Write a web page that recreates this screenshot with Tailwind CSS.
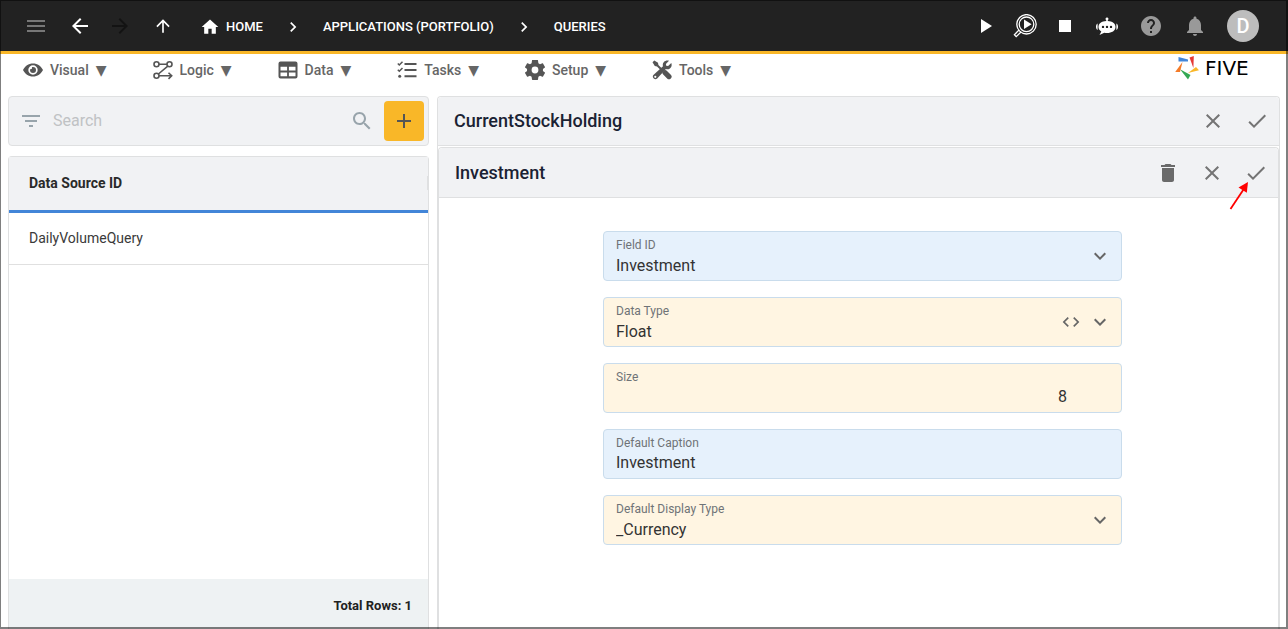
<!DOCTYPE html>
<html lang="en">
<head>
<meta charset="utf-8">
<meta name="viewport" content="width=device-width, initial-scale=1">
<title>Five - Queries</title>
<script src="https://cdn.jsdelivr.net/npm/@tailwindcss/browser@4"></script>
</head>
<body class="relative flex h-screen flex-col overflow-hidden bg-white font-['Roboto',sans-serif] text-[#212121]">
  <header class="flex h-[54px] shrink-0 items-center justify-between border-b-3 border-[#f9b728] bg-[#222] pl-4 pr-[19px] pt-px text-white">
    <div class="flex items-center">
      <button aria-label="Menu" class="mr-1 flex size-10 items-center justify-center text-[#777]"><svg class="size-6" viewBox="0 0 24 24" fill="currentColor"><path d="M3 18h18v-2H3v2zm0-5h18v-2H3v2zm0-7v2h18V6H3z"/></svg></button>
      <button aria-label="Back" class="flex size-10 items-center justify-center"><svg class="size-6" viewBox="0 0 24 24" fill="currentColor"><path d="M20 11H7.830l5.590-5.590L12 4l-8 8 8 8 1.410-1.410L7.830 13H20v-2z"/></svg></button>
      <button aria-label="Forward" disabled class="flex size-10 items-center justify-center text-[#131313]"><svg class="size-6" viewBox="0 0 24 24" fill="currentColor"><path d="M12 4l-1.410 1.410L16.170 11H4v2h12.170l-5.580 5.590L12 20l8-8z"/></svg></button>
      <button aria-label="Up" class="ml-[3px] flex size-10 items-center justify-center"><svg class="size-5" viewBox="0 0 24 24" fill="currentColor"><path d="M4 12l1.410 1.410L11 7.830V20h2V7.830l5.580 5.590L20 12l-8-8-8 8z"/></svg></button>
      <nav aria-label="Breadcrumb" class="ml-[17px] flex items-center pt-px text-[13px] font-medium">
        <a href="#" class="flex items-center gap-1.5"><svg class="size-5" viewBox="0 0 24 24" fill="currentColor"><path d="M10 20v-6h4v6h5v-8h3L12 3 2 12h3v8z"/></svg>HOME</a>
        <svg class="mx-5 size-5" viewBox="0 0 24 24" fill="currentColor"><path d="M10 6 8.590 7.410 13.170 12l-4.580 4.590L10 18l6-6z"/></svg>
        <a href="#">APPLICATIONS (PORTFOLIO)</a>
        <svg class="mx-5 size-5" viewBox="0 0 24 24" fill="currentColor"><path d="M10 6 8.590 7.410 13.170 12l-4.580 4.590L10 18l6-6z"/></svg>
        <a href="#">QUERIES</a>
      </nav>
    </div>
    <div class="flex items-center">
      <button aria-label="Run" class="flex size-10 items-center justify-center"><svg class="size-6" viewBox="0 0 24 24" fill="currentColor"><path d="M8 5v14l11-7z"/></svg></button>
      <button aria-label="Inspect" class="flex size-10 items-center justify-center"><svg class="size-6" viewBox="0 0 24 24" fill="none" stroke="currentColor"><circle cx="13.500" cy="10.300" r="9.700" stroke-width="1.300"/><circle cx="13.500" cy="10.300" r="7.300" stroke-width="1.300"/><path d="M11 5.500v9.600l7.600-4.800z" fill="currentColor" stroke="none"/><path d="m6 16-4.600 4.800 1.800 1.800L8 18" stroke-width="1.300"/></svg></button>
      <button aria-label="Stop" class="flex size-10 items-center justify-center"><svg class="size-6" viewBox="0 0 24 24" fill="currentColor"><path d="M6 6h12v12H6z"/></svg></button>
      <button aria-label="Assistant" class="flex h-10 w-11 items-center justify-center"><svg class="size-6" viewBox="0 0 24 24" fill="currentColor"><path fill-rule="evenodd" d="M12 3.500a1.400 1.400 0 0 1 .8 2.600V7c4.500.2 7.700 2.500 7.700 6 0 3.700-3.700 6-8.500 6-1 0-1.800-.1-2.700-.3L4.500 21l1.800-3.600c-1.800-1-2.800-2.500-2.800-4.400 0-3.500 3.200-5.800 7.700-6v-.9A1.400 1.400 0 0 1 12 3.500zM8 11.700a1.200 1.200 0 1 0 0 2.400 1.200 1.200 0 0 0 0-2.400zm4 0a1.200 1.200 0 1 0 0 2.400 1.200 1.200 0 0 0 0-2.400zm4 0a1.200 1.200 0 1 0 0 2.400 1.200 1.200 0 0 0 0-2.400z"/><path d="M2.600 9.500v6.500C1.600 15.500 1 14.400 1 12.800s.6-2.800 1.600-3.300zm18.800 0v6.500c1-.5 1.600-1.600 1.600-3.200s-.6-2.800-1.600-3.300z"/></svg></button>
      <button aria-label="Help" class="flex h-10 w-11 items-center justify-center text-[#999]"><svg class="size-6" viewBox="0 0 24 24" fill="currentColor"><path d="M12 2C6.480 2 2 6.480 2 12s4.480 10 10 10 10-4.480 10-10S17.520 2 12 2zm1 17h-2v-2h2v2zm2.070-7.750-.9.920C13.450 12.900 13 13.500 13 15h-2v-.5c0-1.100.45-2.100 1.170-2.830l1.240-1.260c.37-.36.590-.86.590-1.410 0-1.100-.9-2-2-2s-2 .9-2 2H8c0-2.210 1.790-4 4-4s4 1.790 4 4c0 .88-.36 1.680-.93 2.250z"/></svg></button>
      <button aria-label="Notifications" class="flex h-10 w-11 items-center justify-center text-[#999]"><svg class="size-6" viewBox="0 0 24 24" fill="currentColor"><path d="M12 22c1.100 0 2-.9 2-2h-4c0 1.100.89 2 2 2zm6-6v-5c0-3.070-1.640-5.640-4.500-6.320V4c0-.83-.67-1.500-1.500-1.500s-1.500.67-1.500 1.500v.68C7.630 5.360 6 7.920 6 11v5l-2 2v1h16v-1l-2-2z"/></svg></button>
      <button aria-label="Account" class="mx-2.5 flex size-8 items-center justify-center rounded-full bg-[#bdbdbd] text-xl font-medium">D</button>
    </div>
  </header>

  <div class="flex h-[42px] shrink-0 items-start justify-between pl-[23px] pr-[25px]">
    <nav aria-label="Main" class="flex gap-[46px] pt-1.5 text-sm font-medium text-[#666]">
      <button class="flex items-center gap-[7px]"><svg class="size-5 text-[#555]" viewBox="0 0 20 20" fill="none"><path fill="currentColor" fill-rule="evenodd" d="M10 3.500c4.500 0 8.200 2.700 10 6.500-1.800 3.800-5.500 6.500-10 6.500S1.800 13.800 0 10c1.800-3.800 5.500-6.500 10-6.500zm0 1.800a4.700 4.700 0 1 0 0 9.400 4.700 4.700 0 0 0 0-9.400z"/><path fill="currentColor" d="M10 7a3 3 0 1 1-3 3c0-.4.100-.7.200-1 .9.600 2.300-.4 1.700-1.800.3-.1.700-.2 1.100-.2z"/></svg><span>Visual</span><span class="font-['DejaVu_Sans',sans-serif] font-normal">▼</span></button>
      <button class="flex items-center gap-[7px]"><svg class="size-5 text-[#555]" viewBox="0 0 20 20" fill="none" stroke="currentColor" stroke-width="1.600"><circle cx="3.500" cy="4.200" r="2.500"/><circle cx="16.500" cy="4.200" r="2.500"/><circle cx="3.500" cy="15.800" r="2.500"/><path d="M6 4.200h8M14.800 6.200 5.400 14M6 15.800h12.500M15.500 12.700l3.200 3.100-3.200 3.100"/></svg><span>Logic</span><span class="font-['DejaVu_Sans',sans-serif] font-normal">▼</span></button>
      <button class="flex items-center gap-[7px]"><svg class="size-5 text-[#555]" viewBox="0 0 20 20" fill="currentColor"><path fill-rule="evenodd" d="M2.500 1.500h15A2 2 0 0 1 19.500 3.500v13a2 2 0 0 1-2 2h-15a2 2 0 0 1-2-2v-13a2 2 0 0 1 2-2zM2.500 6.800v3.700h6.600V6.800zm8.400 0v3.700h6.600V6.800zM2.500 12.500v3.800h6.600v-3.800zm8.400 0v3.800h6.600v-3.800z"/></svg><span>Data</span><span class="font-['DejaVu_Sans',sans-serif] font-normal">▼</span></button>
      <button class="flex items-center gap-[7px]"><svg class="size-5 text-[#555]" viewBox="0 0 20 20" fill="none" stroke="currentColor"><path stroke-width="2" d="M7.500 4H19.500M7.500 10H19.500M7.500 16.300H19.500"/><path stroke-width="1.500" d="m.8 3.500 1.500 1.500 3.200-3.300M.8 9.700l1.500 1.500 3.200-3.300"/><circle cx="2.700" cy="16.300" r="1.500" fill="currentColor" stroke="none"/></svg><span>Tasks</span><span class="font-['DejaVu_Sans',sans-serif] font-normal">▼</span></button>
      <button class="flex items-center gap-[7px]"><svg class="size-5 text-[#555]" viewBox="2 2 20 20" fill="currentColor"><path d="M19.900 12.900c0-.3.100-.6.100-.9s0-.6-.1-.9l2-1.600c.2-.1.200-.4.100-.6l-2-3.500c-.1-.2-.4-.3-.6-.2l-2.400 1c-.5-.4-1-.7-1.600-.9L15 2.400c0-.2-.2-.4-.5-.4h-5c-.2 0-.5.200-.5.400l-.4 2.900c-.6.200-1.100.6-1.600.9l-2.400-1c-.2-.1-.5 0-.6.200l-2 3.500c-.1.200-.1.500.1.600l2 1.600c0 .3-.1.600-.1.900s0 .6.100.9l-2 1.600c-.2.100-.2.400-.1.600l2 3.500c.1.200.4.300.6.200l2.400-1c.5.400 1 .7 1.600.9l.4 2.900c0 .2.300.4.500.4h5c.3 0 .5-.2.500-.4l.4-2.900c.6-.2 1.100-.6 1.600-.9l2.400 1c.2.100.5 0 .6-.2l2-3.500c.1-.2.100-.5-.1-.6zM12 15.400a3.400 3.400 0 1 1 0-6.800 3.400 3.400 0 0 1 0 6.800z"/></svg><span>Setup</span><span class="font-['DejaVu_Sans',sans-serif] font-normal">▼</span></button>
      <button class="flex items-center gap-[7px]"><svg class="size-5 text-[#555]" viewBox="0 0 20 20" fill="currentColor"><path d="M2.300.5 6 2.800l.4 2.200L10 8.600 8.600 10 5 6.400l-2.200-.4L.5 2.300z"/><path d="m10.500 12 1.700-1.700c.8-.4 2-.2 2.800.6l3.800 3.800a2.600 2.600 0 0 1-3.700 3.700l-3.900-3.800c-.8-.8-1-1.900-.7-2.600z"/><path fill-rule="evenodd" d="M17 .8 13.900 4l.3 1.800 1.900.3L19.300 3c.8 2.200.2 4.300-1.400 5.400-1.200.9-2.600 1-4 .6l-8.700 9.500A2.600 2.600 0 0 1 1.400 15L11 6.200c-.5-1.400-.2-3 .9-4.200C13.200.6 15.200.1 17 .8zM3.300 15.700a1.100 1.100 0 1 0 0 2.200 1.100 1.100 0 0 0 0-2.200z"/></svg><span>Tools</span><span class="font-['DejaVu_Sans',sans-serif] font-normal">▼</span></button>
    </nav>
    <a href="#" aria-label="Five" class="flex w-[88px] items-center gap-1.5 pt-0.5">
      <svg class="size-6 shrink-0" viewBox="0 0 24 24"><path fill="#4285d8" d="M3.500 1l9.500 2.600v2H3.500z"/><path fill="#e53935" d="M14.500 1.500 18.800 0l-.4 12z"/><path fill="#f9b728" d="m13 17 8-6 3 3.200z"/><path fill="#34a853" d="M5 13.200 15.500 19 13 23.500z"/><path fill="#f47b28" d="M7.500 6 5 16H.2z"/></svg>
      <span class="font-['DejaVu_Sans',sans-serif] text-xl leading-6 text-black">FIVE</span>
    </a>
  </div>

  <main class="flex min-h-0 flex-1 gap-2 px-2">
    <section class="flex w-[421px] shrink-0 flex-col">
      <div class="flex h-[50px] shrink-0 items-center rounded border border-[#dfe0e1] bg-[#f1f2f4] pl-2.5 pr-1">
        <button aria-label="Filter" class="text-[#98a4ab]"><svg class="size-6" viewBox="0 0 24 24" fill="currentColor"><path d="M10 18h4v-2h-4v2zM3 6v2h18V6H3zm3 7h12v-2H6v2z"/></svg></button>
        <input type="search" aria-label="Search" placeholder="Search" class="ml-2.5 min-w-0 flex-1 bg-transparent text-base outline-none placeholder:text-[#c0c2c4]">
        <button aria-label="Search" class="mr-2.5 text-[#98a4ab]"><svg class="size-6" viewBox="0 0 24 24" fill="currentColor"><path d="M15.500 14h-.79l-.28-.27C15.410 12.590 16 11.110 16 9.500 16 5.910 13.090 3 9.500 3S3 5.910 3 9.500 5.910 16 9.500 16c1.610 0 3.090-.59 4.230-1.570l.27.28v.79l5 4.990L20.490 19l-4.990-5zm-6 0C7.010 14 5 11.990 5 9.500S7.010 5 9.500 5 14 7.010 14 9.500 11.990 14 9.500 14z"/></svg></button>
        <button aria-label="Add" class="flex size-10 items-center justify-center rounded bg-[#f9b728] text-[#555]"><svg class="size-6" viewBox="0 0 24 24" fill="currentColor"><path d="M19 13h-6v6h-2v-6H5v-2h6V5h2v6h6v2z"/></svg></button>
      </div>
      <div class="mt-2.5 flex min-h-0 flex-1 flex-col rounded-t border-x border-t border-[#dfe0e1]">
        <table class="w-full border-collapse text-left text-sm">
          <thead><tr class="h-[54px] border-b-3 border-[#4285d8] bg-[#f1f2f4]"><th scope="col" class="px-5 font-bold text-[#2a2a2a]">Data Source ID</th><th class="w-px p-0"><span class="block h-3.5 w-px bg-[#dfe0e1]"></span></th></tr></thead>
          <tbody><tr class="h-[53px] border-b border-[#e0e0e0]"><td colspan="2" class="px-5 text-[#3a3a3a]">DailyVolumeQuery</td></tr></tbody>
        </table>
        <div class="mt-auto flex h-[50px] items-center justify-end bg-[#eef2f3] px-4 pt-1 text-[13px] font-bold">Total Rows: 1</div>
      </div>
    </section>

    <section class="flex min-w-0 flex-1 flex-col rounded-t border-x border-t border-[#dfe0e1]">
      <div class="flex h-[49px] shrink-0 items-center rounded-t border-b border-[#dfe0e1] bg-[#f1f2f4] pl-4 text-[#747474]">
        <h1 class="flex-1 text-lg font-medium text-[#1a2233]">CurrentStockHolding</h1>
        <button aria-label="Cancel stock holding" class="flex size-11 items-center justify-center"><svg class="size-6" viewBox="0 0 24 24" fill="currentColor"><path d="M19 6.410 17.590 5 12 10.590 6.410 5 5 6.410 10.590 12 5 17.590 6.410 19 12 13.410 17.590 19 19 17.590 13.410 12z"/></svg></button>
        <button aria-label="Save stock holding" class="flex size-11 items-center justify-center"><svg class="size-6" viewBox="0 0 24 24" fill="currentColor"><path d="M9 16.170 4.830 12l-1.420 1.410L9 19 21 7l-1.410-1.410z"/></svg></button>
      </div>
      <div class="mt-px flex min-h-0 flex-1 flex-col rounded-t border-x border-t border-[#dfe0e1]">
        <div class="flex h-[50px] shrink-0 items-center rounded-t border-b border-[#dfe0e1] bg-[#f1f2f4] pl-4 text-[#747474]">
          <h2 class="flex-1 text-lg font-medium text-[#1a2233]">Investment</h2>
          <button aria-label="Delete" class="flex size-11 items-center justify-center text-[#6a6a6a]"><svg class="size-6" viewBox="0 0 24 24" fill="currentColor"><path d="M6 19c0 1.100.9 2 2 2h8c1.100 0 2-.9 2-2V7H6v12zM19 4h-3.500l-1-1h-5l-1 1H5v2h14V4z"/></svg></button>
          <button aria-label="Cancel" class="flex size-11 items-center justify-center"><svg class="size-6" viewBox="0 0 24 24" fill="currentColor"><path d="M19 6.410 17.590 5 12 10.590 6.410 5 5 6.410 10.590 12 5 17.590 6.410 19 12 13.410 17.590 19 19 17.590 13.410 12z"/></svg></button>
          <button aria-label="Save" class="relative flex size-11 items-center justify-center"><svg class="size-6" viewBox="0 0 24 24" fill="currentColor"><path d="M9 16.170 4.830 12l-1.420 1.410L9 19 21 7l-1.410-1.410z"/></svg>
            <svg class="absolute -left-1.5 top-7 z-10 h-8 w-6" viewBox="0 0 24 32" fill="#f00"><path stroke="#f00" stroke-width="1.800" d="M2.500 30 15.500 10.500"/><path d="M20 3 18.800 13.800 10.500 8.500z"/></svg></button>
        </div>
        <div class="pl-2 pt-[33px]">
        <form class="mx-auto flex w-full max-w-[519px] flex-col gap-4 text-[#6f7377]">
          <div class="flex h-[50px] items-center rounded border border-[#c9dcec] bg-[#e6f1fc] pl-3 pr-[9px]">
            <div class="flex min-w-0 flex-1 flex-col pt-1"><label for="field-id" class="text-xs leading-4">Field ID</label><select id="field-id" class="h-[26px] appearance-none bg-transparent text-base text-[#333] outline-none"><option>Investment</option></select></div>
            <svg class="pointer-events-none size-6 text-[#666]" viewBox="0 0 24 24" fill="currentColor"><path d="M16.590 8.590 12 13.170 7.410 8.590 6 10l6 6 6-6z"/></svg>
          </div>
          <div class="flex h-[50px] items-center rounded border border-[#c9dcec] bg-[#fff5e2] pl-3 pr-[9px]">
            <div class="flex min-w-0 flex-1 flex-col pt-1"><label for="data-type" class="text-xs leading-4">Data Type</label><select id="data-type" class="h-[26px] appearance-none bg-transparent text-base text-[#333] outline-none"><option>Float</option></select></div>
            <button type="button" aria-label="Edit expression" class="mr-[7px] text-[#666]"><svg class="size-5" viewBox="0 0 24 24" fill="currentColor"><path d="M9.400 16.600 4.800 12l4.600-4.600L8 6l-6 6 6 6 1.400-1.400zm5.200 0 4.600-4.600-4.600-4.600L16 6l6 6-6 6-1.400-1.400z"/></svg></button>
            <svg class="pointer-events-none size-6 text-[#666]" viewBox="0 0 24 24" fill="currentColor"><path d="M16.590 8.590 12 13.170 7.410 8.590 6 10l6 6 6-6z"/></svg>
          </div>
          <div class="flex h-[50px] flex-col justify-center rounded border border-[#c9dcec] bg-[#fff5e2] pl-3 pr-[54px] pt-0.5">
            <label for="size" class="text-xs leading-4">Size</label><input id="size" type="text" inputmode="numeric" value="8" class="h-6 w-full bg-transparent text-right text-base text-[#333] outline-none">
          </div>
          <div class="flex h-[50px] flex-col justify-center rounded border border-[#c9dcec] bg-[#e6f1fc] px-3 pt-0.5">
            <label for="caption" class="text-xs leading-4">Default Caption</label><input id="caption" type="text" value="Investment" class="h-6 w-full bg-transparent text-base text-[#333] outline-none">
          </div>
          <div class="flex h-[50px] items-center rounded border border-[#c9dcec] bg-[#fff5e2] pl-3 pr-[9px]">
            <div class="flex min-w-0 flex-1 flex-col pt-1"><label for="display" class="text-xs leading-4">Default Display Type</label><select id="display" class="h-[26px] appearance-none bg-transparent text-base text-[#333] outline-none"><option>_Currency</option></select></div>
            <svg class="pointer-events-none size-6 text-[#666]" viewBox="0 0 24 24" fill="currentColor"><path d="M16.590 8.590 12 13.170 7.410 8.590 6 10l6 6 6-6z"/></svg>
          </div>
        </form>
        </div>
      </div>
    </section>
  </main>
  <div class="pointer-events-none absolute inset-0 border-b-2 border-l border-r-2 border-t border-black/50"></div>
</body>
</html>
